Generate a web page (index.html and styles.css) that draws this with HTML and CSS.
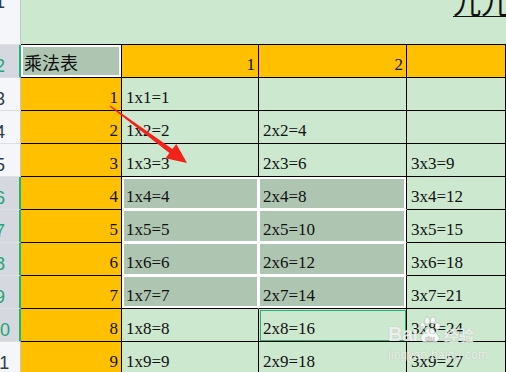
FILE: index.html
```html
<!DOCTYPE html>
<html lang="zh">
<head>
<meta charset="utf-8">
<title>九九乘法表</title>
<link rel="stylesheet" href="styles.css">
</head>
<body>
<div class="sheet">
  <div class="grid">
    <!-- row 1 -->
    <div class="hdr hdr-top"><span>1</span></div>
    <div class="cell title-cell"><span class="title">九九乘法表</span></div>

    <!-- row 2 -->
    <div class="hdr on"><span>2</span></div>
    <div class="cell active">乘法表</div>
    <div class="cell org num">1</div>
    <div class="cell org num">2</div>
    <div class="cell org num"></div>

    <!-- row 3 -->
    <div class="hdr"><span>3</span></div>
    <div class="cell org num">1</div>
    <div class="cell">1x1=1</div>
    <div class="cell"></div>
    <div class="cell"></div>

    <!-- row 4 -->
    <div class="hdr"><span>4</span></div>
    <div class="cell org num">2</div>
    <div class="cell">1x2=2</div>
    <div class="cell">2x2=4</div>
    <div class="cell"></div>

    <!-- row 5 -->
    <div class="hdr"><span>5</span></div>
    <div class="cell org num">3</div>
    <div class="cell">1x3=3</div>
    <div class="cell">2x3=6</div>
    <div class="cell">3x3=9</div>

    <!-- row 6 -->
    <div class="hdr on"><span>6</span></div>
    <div class="cell org num">4</div>
    <div class="cell sel sel-tl">1x4=4</div>
    <div class="cell sel sel-tr">2x4=8</div>
    <div class="cell">3x4=12</div>

    <!-- row 7 -->
    <div class="hdr on"><span>7</span></div>
    <div class="cell org num">5</div>
    <div class="cell sel sel-l">1x5=5</div>
    <div class="cell sel sel-r">2x5=10</div>
    <div class="cell">3x5=15</div>

    <!-- row 8 -->
    <div class="hdr on"><span>8</span></div>
    <div class="cell org num">6</div>
    <div class="cell sel sel-l">1x6=6</div>
    <div class="cell sel sel-r">2x6=12</div>
    <div class="cell">3x6=18</div>

    <!-- row 9 -->
    <div class="hdr on"><span>9</span></div>
    <div class="cell org num">7</div>
    <div class="cell sel sel-bl">1x7=7</div>
    <div class="cell sel sel-br">2x7=14</div>
    <div class="cell">3x7=21</div>

    <!-- row 10 -->
    <div class="hdr on"><span>10</span></div>
    <div class="cell org num">8</div>
    <div class="cell">1x8=8</div>
    <div class="cell cursor">2x8=16</div>
    <div class="cell">3x8=24</div>

    <!-- row 11 -->
    <div class="hdr"><span>11</span></div>
    <div class="cell org num">9</div>
    <div class="cell">1x9=9</div>
    <div class="cell">2x9=18</div>
    <div class="cell">3x9=27</div>
  </div>

  <svg class="arrow" width="506" height="372" viewBox="0 0 506 372" aria-hidden="true">
    <polygon points="110.3,105.4 172.4,149.1 176.3,143.9 187,163 165.5,158.3 169.4,153.1 109.7,106.6" fill="#f3221a"/>
  </svg>

  <div class="watermark">
    <div class="wm-logo">
      <span class="wm-bai">Bai</span>
      <svg class="wm-paw" width="22" height="27" viewBox="0 0 22 27" aria-hidden="true">
        <g fill="rgba(255,255,255,0.8)" stroke="rgba(120,120,120,0.35)" stroke-width="0.8">
          <ellipse cx="3.5" cy="10" rx="2.6" ry="3.4"/>
          <ellipse cx="8.2" cy="4.5" rx="2.6" ry="3.6"/>
          <ellipse cx="14" cy="4.5" rx="2.6" ry="3.6"/>
          <ellipse cx="18.6" cy="10" rx="2.6" ry="3.4"/>
          <path d="M11 12 C7 12 5 17 2.5 20 C0.5 23 3 26.5 6.5 26 C9 25.7 13 25.7 15.5 26 C19 26.5 21.5 23 19.5 20 C17 17 15 12 11 12 Z"/>
        </g>
        <text x="11" y="24.5" text-anchor="middle" font-family="Liberation Sans, sans-serif" font-weight="700" font-size="8" fill="rgba(200,200,200,0.9)">du</text>
      </svg>
      <span class="wm-jy">经验</span>
    </div>
    <div class="wm-url">jingyan.baidu.com</div>
  </div>
</div>
</body>
</html>
```

FILE: styles.css
```css
html, body {
  margin: 0;
  padding: 0;
  width: 506px;
  height: 372px;
  overflow: hidden;
  background: #cce8cf;
}

.sheet {
  position: relative;
  width: 506px;
  height: 372px;
  overflow: hidden;
}

.grid {
  display: grid;
  grid-template-columns: 21px 101px 137px 148px 99px;
  grid-template-rows: 45px repeat(10, 33px);
}

.hdr {
  box-sizing: border-box;
  background: #f5f6f9;
  border-right: 1px solid #c3c7ce;
  border-bottom: 1px solid #dcdfe4;
  overflow: hidden;
  display: flex;
  align-items: flex-end;
  padding-bottom: 1px;
  font-family: "Liberation Sans", Arial, sans-serif;
  font-size: 18px;
  line-height: 20px;
  color: #2f3a4c;
}

.hdr span {
  display: block;
  flex: none;
  width: 40px;
  margin-left: -20px;
  text-align: center;
}

.hdr.on {
  background: #d5d8de;
  color: #22a577;
  border-right: 2px solid #20b472;
}

.hdr-top {
  align-items: flex-start;
  padding-bottom: 0;
}

.hdr-top span {
  margin-top: -8px;
}

.cell {
  box-sizing: border-box;
  background: #cce8cf;
  border-right: 1px solid #000;
  border-bottom: 1px solid #000;
  display: flex;
  align-items: flex-end;
  padding: 0 3px 2px 4px;
  font-family: "Liberation Serif", "Times New Roman", serif;
  font-size: 17px;
  line-height: 20px;
  color: #111;
  white-space: nowrap;
  overflow: hidden;
}

.title-cell {
  grid-column: 2 / 6;
  align-items: flex-start;
  padding: 0;
  border-right: none;
}

.title {
  display: block;
  margin-top: -11px;
  margin-left: 432px;
  font-family: "Noto Sans CJK SC", sans-serif;
  font-size: 28px;
  line-height: 27px;
  height: 27px;
  border-bottom: 1px solid #111;
  color: #111;
}

.org {
  background: #ffc000;
}

.num {
  justify-content: flex-end;
}

.active {
  background: #aec6b1;
  box-shadow: inset 0 0 0 2px #fff;
  font-family: "Noto Sans CJK SC", sans-serif;
  font-size: 18px;
  line-height: 20px;
  padding: 0 3px 5px 3px;
}

.sel {
  background: #aec6b1;
}

.sel-tl, .sel-l {
  border-right-color: #fff;
}

.sel-tl, .sel-tr, .sel-l, .sel-r {
  border-bottom-color: #fff;
}

.sel-bl {
  border-right-color: #fff;
}

.sel-tl { box-shadow: inset 0 0 0 1px #fff, inset 0 2px 0 #fff, inset 2px 0 0 #fff; }
.sel-tr { box-shadow: inset 0 0 0 1px #fff, inset 0 2px 0 #fff, inset -2px 0 0 #fff; }
.sel-l  { box-shadow: inset 0 0 0 1px #fff, inset 2px 0 0 #fff; }
.sel-r  { box-shadow: inset 0 0 0 1px #fff, inset -2px 0 0 #fff; }
.sel-bl { box-shadow: inset 0 0 0 1px #fff, inset 0 -2px 0 #fff, inset 2px 0 0 #fff; }
.sel-br { box-shadow: inset 0 0 0 1px #fff, inset 0 -2px 0 #fff, inset -2px 0 0 #fff; }

.cursor {
  outline: 1px solid #28b07a;
  outline-offset: -2px;
}

.arrow {
  position: absolute;
  left: 0;
  top: 0;
  pointer-events: none;
}

.watermark {
  position: absolute;
  left: 388px;
  top: 316px;
  width: 92px;
  color: rgba(255, 255, 255, 0.78);
  text-shadow: 0 0 1px rgba(90, 90, 90, 0.35);
  pointer-events: none;
}

.wm-logo {
  display: flex;
  align-items: flex-end;
  gap: 1px;
  height: 28px;
}

.wm-bai {
  font-family: "Liberation Sans", Arial, sans-serif;
  font-weight: 700;
  font-size: 20px;
  line-height: 20px;
  letter-spacing: -0.5px;
}

.wm-paw {
  display: block;
  margin-bottom: 1px;
}

.wm-jy {
  font-family: "Noto Sans CJK SC", sans-serif;
  font-weight: 700;
  font-size: 15px;
  line-height: 18px;
  margin-left: 2px;
}

.wm-url {
  margin-top: 4px;
  font-family: "Liberation Sans", Arial, sans-serif;
  font-size: 12px;
  line-height: 14px;
  letter-spacing: 0.2px;
}
```
